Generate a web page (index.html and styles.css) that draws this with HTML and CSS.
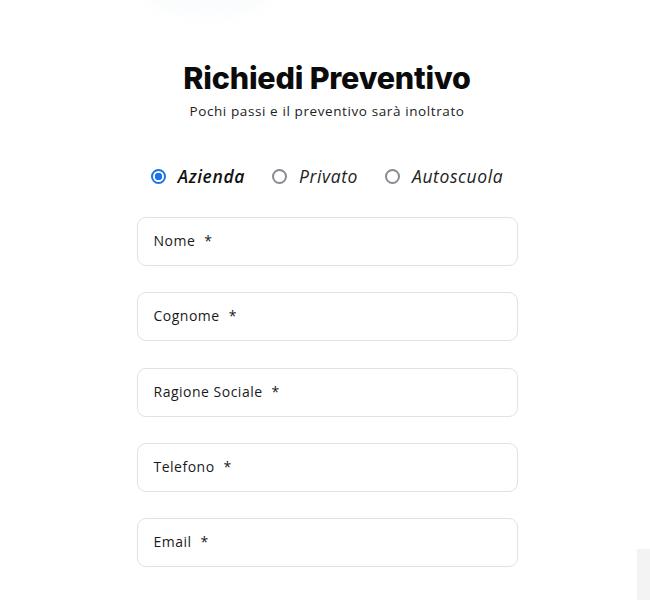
FILE: index.html
```html
<!DOCTYPE html>
<html lang="it">
<head>
  <meta charset="UTF-8" />
  <meta name="viewport" content="width=device-width, initial-scale=1.0"/>
  <title>Richiedi Preventivo</title>
  <link rel="stylesheet" href="styles.css">
</head>
<body>
  <div class="top-glow"></div>

  <div class="quote-form">
    <h1>Richiedi Preventivo</h1>
    <p class="subtitle">Pochi passi e il preventivo sarà inoltrato</p>

    <div class="type-choice">
      <label class="choice selected"><span class="radio"></span>Azienda</label>
      <label class="choice"><span class="radio"></span>Privato</label>
      <label class="choice"><span class="radio"></span>Autoscuola</label>
    </div>

    <div class="fields">
      <div class="field">Nome<span class="req">*</span></div>
      <div class="field">Cognome<span class="req">*</span></div>
      <div class="field">Ragione Sociale<span class="req">*</span></div>
      <div class="field">Telefono<span class="req">*</span></div>
      <div class="field">Email<span class="req">*</span></div>
    </div>
  </div>

  <div class="side-tab"></div>
</body>
</html>
```

FILE: styles.css
```css
body {
  margin: 0;
  background: #ffffff;
  font-family: "Open Sans", Arial, sans-serif;
  color: #111;
  height: 600px;
  overflow: hidden;
  position: relative;
}

.top-glow {
  position: absolute;
  top: -18px;
  left: 145px;
  width: 125px;
  height: 34px;
  border-radius: 50%;
  background: #fbfcfd;
  filter: blur(6px);
}

.quote-form {
  width: 381px;
  margin: 0 auto;
  padding-top: 58px;
  position: relative;
  left: 2px;
}

h1 {
  margin: 0;
  text-align: center;
  font-family: Inter, Arial, sans-serif;
  font-weight: 800;
  font-size: 30.5px;
  line-height: 40px;
  letter-spacing: -0.2px;
  color: #0b0b0b;
}

.subtitle {
  margin: 3px 0 0;
  text-align: center;
  font-size: 13.5px;
  line-height: 20px;
  letter-spacing: 0.6px;
  color: #222;
}

.type-choice {
  display: flex;
  justify-content: center;
  gap: 27px;
  margin-top: 43px;
  font-size: 17.5px;
  letter-spacing: 0.6px;
  font-style: italic;
  color: #222;
}

.choice {
  display: flex;
  align-items: center;
  gap: 12px;
}

.choice.selected {
  font-weight: 600;
  color: #111;
}

.radio {
  width: 11px;
  height: 11px;
  border: 2px solid #8a8a92;
  border-radius: 50%;
  background: #fff;
}

.selected .radio {
  border-color: #1a73e8;
  background: radial-gradient(circle, #1a73e8 0 3.5px, #fff 4px);
}

.fields {
  display: flex;
  flex-direction: column;
  gap: 26.25px;
  margin-top: 29px;
}

.field {
  height: 49px;
  border: 1px solid #e2e2e2;
  border-radius: 9px;
  padding: 13px 16px 0;
  box-sizing: border-box;
  font-size: 14px;
  letter-spacing: 0.5px;
  color: #1a1a1a;
}

.req {
  margin-left: 9px;
}

.side-tab {
  position: absolute;
  right: 0;
  top: 549px;
  width: 13px;
  height: 51px;
  background: #f3f3f3;
}
```
